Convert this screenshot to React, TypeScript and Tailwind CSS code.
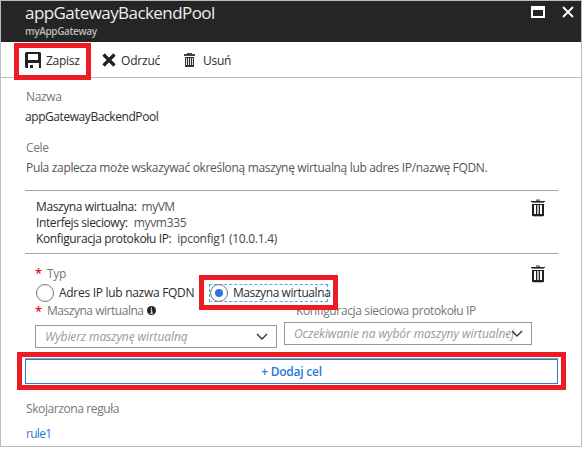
import type { ReactNode } from "react";

function TrashIcon({ className = "h-[18px] w-[14px]" }: { className?: string }) {
  return (
    <svg viewBox="0 0 14 18" className={`shrink-0 ${className}`} shapeRendering="crispEdges">
      <rect x="5" y="0" width="4" height="1" fill="#aaa" />
      <rect x="5" y="1" width="4" height="1" fill="#777" />
      <rect x="0" y="2" width="14" height="1" fill="#222" />
      <rect x="1" y="3" width="12" height="1" fill="#777" />
      <path d="M1 5h12v12H1z" fill="#222" />
      <path d="M3 6h8v9H3z" fill="#fff" />
      <path d="M5 6h1v9H5zM8 6h1v9H8z" fill="#222" />
      <path d="M6 6h2v9H6z" fill="#bbb" />
      <rect x="2" y="17" width="10" height="1" fill="#bbb" />
    </svg>
  );
}

function SmallTrashIcon() {
  return (
    <svg viewBox="0 0 11 14" className="h-[14px] w-[11px] shrink-0" shapeRendering="crispEdges">
      <path d="M3 0h5v1H3zM0 1h11v2H0z" fill="#444" />
      <path d="M1 4h9v10H1z" fill="#333" />
      <path d="M2 5h1v7H2zM4 5h1v7H4zM6 5h1v7H6zM8 5h1v7H8z" fill="#ddd" />
    </svg>
  );
}

function SaveIcon() {
  return (
    <svg viewBox="0 0 16 16" className="h-4 w-4 shrink-0">
      <path fillRule="evenodd" d="M1 0h14l1 1v15h-2v-5H3v5H1l-1-1V1zM3 2v6h10V2z" fill="#222" />
      <rect x="5" y="13" width="3" height="3" fill="#222" />
    </svg>
  );
}

function Chevron() {
  return (
    <svg viewBox="0 0 12 8" className="h-2 w-3 shrink-0">
      <path d="M1 1l5 5 5-5" fill="none" stroke="#333" strokeWidth="1.4" />
    </svg>
  );
}

function Star() {
  return <span className="w-3 shrink-0 text-[13px] leading-4 font-semibold text-[#e01020]">*</span>;
}

function Row({ className, children }: { className: string; children: ReactNode }) {
  return <div className={`flex whitespace-nowrap ${className}`}>{children}</div>;
}

export default function App() {
  return (
    <div className="h-[450px] w-[582px] overflow-hidden bg-white font-['Open_Sans','Noto_Sans',sans-serif] text-[12px] leading-4 tracking-[-0.36px] text-[#2c2c2c]">
      <div className="relative h-[447px] w-[582px] border border-[#bbb] whitespace-nowrap">
        <header className="flex h-[41px] justify-between bg-[#252525] pr-[7px] pl-6">
          <div>
            <div className="h-[22px] text-[17px] leading-[23px] tracking-[-0.57px] text-[#eee]">appGatewayBackendPool</div>
            <div className="mt-px text-[10px] leading-[14px] font-semibold text-[#bbb]">myAppGateway</div>
          </div>
          <div className="flex gap-[17px] pt-[5px]">
            <svg viewBox="0 0 14 12" className="h-3 w-[14px]">
              <path fillRule="evenodd" d="M0 0h14v12H0zM2 4v6h10V4z" fill="#fff" />
            </svg>
            <svg viewBox="0 0 12 12" className="h-3 w-3">
              <path d="M1 1l10 10M11 1L1 11" stroke="#fff" strokeWidth="1.8" />
            </svg>
          </div>
        </header>
        <nav className="flex h-9 items-center border-b border-[#bbb] pl-6 tracking-[-0.27px]">
          <SaveIcon />
          <span className="mt-0.5 ml-[5px] w-[56px]">Zapisz</span>
          <svg viewBox="0 0 14 14" className="h-[14px] w-[14px]">
            <path d="M1.500 1.500l11 11M12.500 1.500l-11 11" stroke="#222" strokeWidth="3.200" />
          </svg>
          <span className="mt-0.5 ml-[5px] w-[63px] tracking-[-0.2px]">Odrzuć</span>
          <SmallTrashIcon />
          <span className="mt-0.5 ml-2">Usuń</span>
        </nav>
        <main className="pr-[23px] pl-6">
          <Row className="mt-[11px] pl-px text-[#777]">Nazwa</Row>
          <Row className="mt-1 tracking-[-0.43px]">appGatewayBackendPool</Row>
          <Row className="mt-[15px] pl-px text-[#777]">Cele</Row>
          <Row className="mt-1 pl-px tracking-[-0.33px] text-[#555]">Pula zaplecza może wskazywać określoną maszynę wirtualną lub adres IP/nazwę FQDN.</Row>

          <section className="mt-[14px] flex h-16 justify-between border-y border-[#a5a5a5] pt-[8px] pr-[13px] pl-[11px]">
            <div>
              <Row className="gap-[5px]"><span className="tracking-[-0.4px]">Maszyna wirtualna:</span><span className="tracking-[-0.5px] text-[#555]">myVM</span></Row>
              <Row className="gap-[6px]"><span className="tracking-[-0.4px]">Interfejs sieciowy:</span><span className="tracking-[-0.3px] text-[#555]">myvm335</span></Row>
              <Row className="gap-[6px]"><span>Konfiguracja protokołu IP:</span><span className="tracking-[-0.27px] text-[#444]">ipconfig1 (10.0.1.4)</span></Row>
            </div>
            <TrashIcon />
          </section>

          <section className="h-[105px] border-b border-[#999] pl-[10px]">
            <div className="flex h-[30px] justify-between pt-[11px] pr-[13px]">
              <Row className="text-[#777]"><Star /><span className="pt-px">Typ</span></Row>
              <TrashIcon />
            </div>
            <div className="flex h-[18px] items-center pl-px">
              <span className="h-[18px] w-[18px] rounded-full border border-[#777]" />
              <span className="ml-[5px] w-[150px] tracking-[-0.29px]">Adres IP lub nazwa FQDN</span>
              <span className="flex h-[18px] w-[119px] items-center border border-dashed border-[#3cb4ea]">
                <span className="flex h-[18px] w-[18px] shrink-0 items-center justify-center rounded-full border border-[#777]">
                  <span className="h-2 w-2 rounded-full bg-[#2a78dc]" />
                </span>
                <span className="ml-[5px] tracking-[-0.42px]">Maszyna wirtualna</span>
              </span>
            </div>
            <div className="flex">
              <div className="w-[242px]">
                <Row className="h-[17px] items-end text-[#777]">
                  <Star />
                  <span className="tracking-[-0.47px]">Maszyna wirtualna</span>
                  <svg viewBox="0 0 9 9" className="mb-1 ml-[3px] h-[9px] w-[9px]">
                    <circle cx="4.500" cy="4.500" r="4.500" fill="#222" />
                    <path d="M4.500 1.500v1.400M3.500 4h1.200v3M3.200 7.200h2.800" stroke="#fff" strokeWidth="1" />
                  </svg>
                </Row>
                <div className="mt-[6px] flex h-[23px] items-center justify-between border border-[#999] pr-2 pl-[9px] tracking-[-0.1px] text-[#999] italic">
                  <span>Wybierz maszynę wirtualną</span>
                  <Chevron />
                </div>
              </div>
              <div className="ml-[7px] w-[248px]">
                <Row className="h-[17px] items-end pl-3 tracking-[-0.36px] text-[#777]">Konfiguracja sieciowa protokołu IP</Row>
                <div className="mt-[3px] flex h-[23px] items-center justify-between border border-[#999] pr-2 pl-[9px] tracking-[-0.07px] text-[#999] italic">
                  <span className="w-[220px]">Oczekiwanie na wybór maszyny wirtualnej</span>
                  <span className="-ml-3 flex"><Chevron /></span>
                </div>
              </div>
            </div>
          </section>

          <button className="flex h-[25px] w-full items-center justify-center border border-[#2a78dc] font-semibold tracking-[-0.24px] text-[#2a78dc]">+ Dodaj cel</button>
          <Row className="mt-[17px] pl-px tracking-[-0.4px] text-[#777]">Skojarzona reguła</Row>
          <Row className="mt-[9px] pl-px tracking-[-0.7px] text-[#2a78dc]">rule1</Row>
        </main>
        <div className="absolute top-[42px] left-[13px] h-[37px] w-[77px] border-5 border-[#ed1c24]" />
        <div className="absolute top-[274px] left-[198px] h-[35px] w-[139px] border-5 border-[#ed1c24]" />
        <div className="absolute top-[351px] left-4 h-[38px] w-[549px] border-5 border-[#ed1c24]" />
      </div>
    </div>
  );
}
